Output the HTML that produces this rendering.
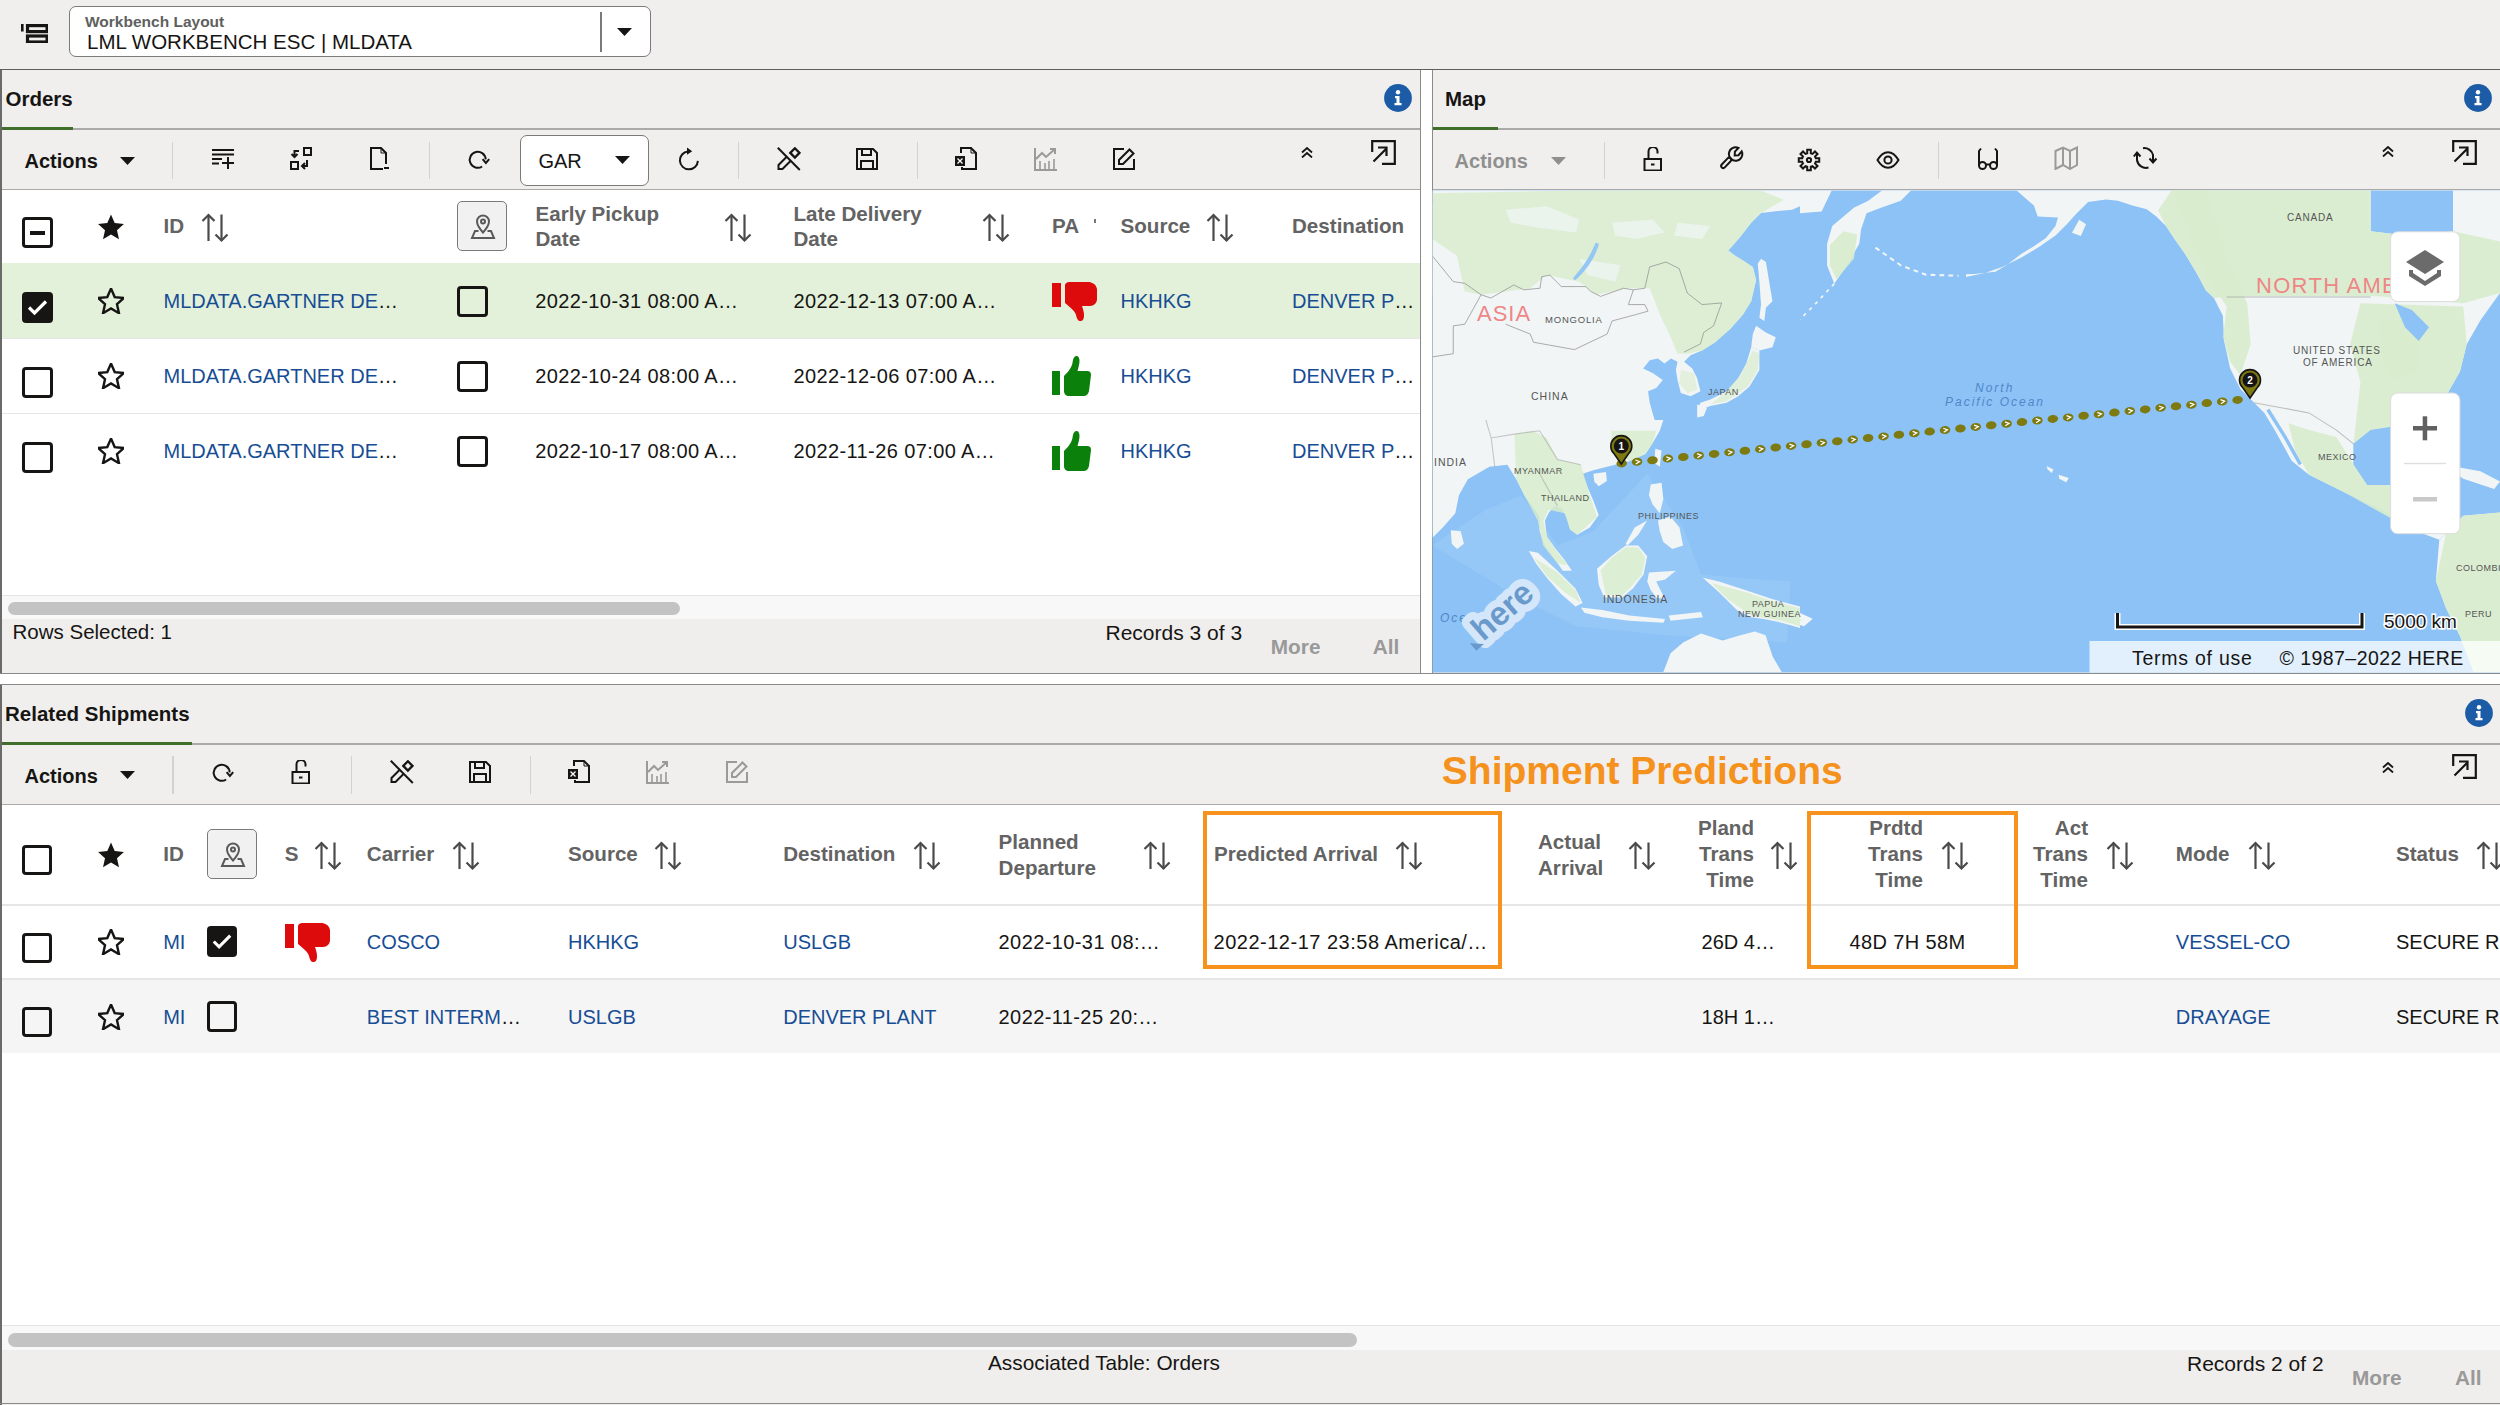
<!DOCTYPE html><html><head><meta charset="utf-8"><style>
html,body{margin:0;padding:0;}
body{width:2500px;height:1405px;overflow:hidden;position:relative;background:#f0efed;font-family:"Liberation Sans", sans-serif;}
.t{position:absolute;white-space:nowrap;font-family:"Liberation Sans", sans-serif;}
svg{display:block}
</style></head><body>
<svg style="position:absolute;left:21px;top:24px;" width="27" height="19" viewBox="0 0 27 19"><rect x="0" y="0" width="2.6" height="7.5" fill="#161513"/><rect x="6.5" y="1.6" width="19.6" height="6" fill="none" stroke="#161513" stroke-width="3.2"/><rect x="6.5" y="12" width="19.6" height="6" fill="none" stroke="#161513" stroke-width="3.2"/></svg>
<div style="position:absolute;left:68.5px;top:6px;width:580px;height:49px;border:1px solid #7b7b7b;border-radius:7px;background:#fff"></div>
<div style="position:absolute;left:600px;top:12px;width:1.5px;height:40px;background:#7a7a7a"></div>
<svg style="position:absolute;left:617px;top:28px;" width="15" height="8" viewBox="0 0 15 8"><polygon points="0,0 15,0 7.5,8" fill="#161513"/></svg>
<div class="t" style="left:85px;top:13.6px;font-size:15.5px;line-height:15.5px;font-weight:700;color:#5f5f5f;">Workbench Layout</div>
<div class="t" style="left:87px;top:31.6px;font-size:20.5px;line-height:20.5px;font-weight:400;color:#161513;">LML WORKBENCH ESC | MLDATA</div>
<div style="position:absolute;left:0px;top:68.5px;width:2500px;height:1.8px;background:#5e5e5e"></div>
<div style="position:absolute;left:0px;top:70px;width:1.6px;height:603px;background:#6a6a6a"></div>
<div style="position:absolute;left:1420px;top:70px;width:1.2px;height:603px;background:#8a8a8a"></div>
<div class="t" style="left:5.5px;top:88.6px;font-size:20.5px;line-height:20.5px;font-weight:700;color:#161513;">Orders</div>
<svg style="position:absolute;left:1383.7px;top:84.1px;" width="28" height="28" viewBox="0 0 28 28"><circle cx="14" cy="14" r="13.9" fill="#1c5ca6"/><circle cx="14" cy="8.2" r="2.2" fill="#fff"/><path d="M11 12H15.5V19H17.5V21.3H10.5V19H12.5V14.3H11Z" fill="#fff"/></svg>
<div style="position:absolute;left:1.6px;top:128.3px;width:1418.4px;height:1.4px;background:#aaa"></div>
<div style="position:absolute;left:1.6px;top:127.4px;width:71.4px;height:2.6px;background:#3f6f2a"></div>
<div class="t" style="left:24.5px;top:151.1px;font-size:20px;line-height:20px;font-weight:700;color:#161513;">Actions</div>
<svg style="position:absolute;left:120px;top:157px;" width="15" height="8" viewBox="0 0 15 8"><polygon points="0,0 15,0 7.5,8" fill="#161513"/></svg>
<div style="position:absolute;left:172px;top:141.5px;width:1.2px;height:37.5px;background:#d4d2cf"></div>
<svg style="position:absolute;left:210.5px;top:147.0px;" width="24" height="24" viewBox="0 0 24 24"><g fill="none" stroke="#161513" stroke-width="2" stroke-linecap="butt"><path d="M1 3H23M1 7.5H23M1 12H11M1 16.5H8M17 10V22M11 16H23"/></g></svg>
<svg style="position:absolute;left:288.5px;top:146.5px;" width="24" height="24" viewBox="0 0 24 24"><g fill="none" stroke="#161513" stroke-width="2" stroke-linecap="butt"><rect x="15" y="1" width="7" height="7"/><rect x="2" y="15" width="7" height="7"/><path d="M10 4H5.5V10M2.5 7L5.5 10L8.5 7"/><path d="M18 13V19H13M16 16L13 19L16 22"/></g></svg>
<svg style="position:absolute;left:368.0px;top:146.5px;" width="24" height="24" viewBox="0 0 24 24"><g fill="none" stroke="#161513" stroke-width="2" stroke-linecap="butt"><path d="M15 22H3V1H13L18 6V17"/><path d="M13 1V6H18" stroke-width="1"/><path d="M16 21H21"/></g></svg>
<div style="position:absolute;left:429px;top:141.5px;width:1.2px;height:37.5px;background:#d4d2cf"></div>
<svg style="position:absolute;left:467.0px;top:147.0px;" width="24" height="24" viewBox="0 0 24 24"><g fill="none" stroke="#161513" stroke-width="2" stroke-linecap="butt"><path d="M15.1 19.5A8 8 0 1 1 18.7 12.4"/><path d="M15.6 12.2L18.9 16L22.2 12.2"/></g></svg>
<div style="position:absolute;left:519.6px;top:135px;width:127px;height:49px;border:1px solid #7a7a7a;border-radius:7px;background:#fff"></div>
<div class="t" style="left:538.4px;top:150.5px;font-size:20px;line-height:20px;font-weight:400;color:#161513;">GAR</div>
<svg style="position:absolute;left:614.7px;top:156px;" width="15" height="8" viewBox="0 0 15 8"><polygon points="0,0 15,0 7.5,8" fill="#161513"/></svg>
<svg style="position:absolute;left:675.5px;top:146.5px;" width="24" height="24" viewBox="0 0 24 24"><g fill="none" stroke="#161513" stroke-width="2" stroke-linecap="butt"><path d="M21.9 13.9A9 9 0 1 1 12 4.4"/><polygon points="11,0.6 16.2,4.2 11,7.8" fill="#161513" stroke="none"/></g></svg>
<div style="position:absolute;left:738px;top:141.5px;width:1.2px;height:37.5px;background:#d4d2cf"></div>
<svg style="position:absolute;left:777.0px;top:147.0px;" width="24" height="24" viewBox="0 0 24 24"><g fill="none" stroke="#161513" stroke-width="2" stroke-linecap="butt"><path d="M0.8 0.8L22.8 23"/><path d="M13.3 5.9L17.9 1.3L22.5 5.9L17.9 10.5Z" stroke-width="2.3"/><path d="M9.5 10L1.5 18V22H5.5L13.5 14"/></g></svg>
<svg style="position:absolute;left:854.5px;top:147.0px;" width="24" height="24" viewBox="0 0 24 24"><g fill="none" stroke="#161513" stroke-width="2" stroke-linecap="butt"><path d="M2 2H18L22 6V22H2Z"/><path d="M7 2V8H16V2"/><path d="M6 22V14H18V22"/></g></svg>
<div style="position:absolute;left:917px;top:141.5px;width:1.2px;height:37.5px;background:#d4d2cf"></div>
<svg style="position:absolute;left:953.5px;top:146.5px;" width="24" height="24" viewBox="0 0 24 24"><g fill="none" stroke="#161513" stroke-width="2" stroke-linecap="butt"><path d="M7 6V1H17L22 6V22H8V20"/><path d="M17 1V6H22" stroke-width="1"/><rect x="1" y="9" width="10" height="10" fill="#161513" stroke="none"/><path d="M3.5 11.5L8.5 16.5M8.5 11.5L3.5 16.5" stroke="#fff" stroke-width="1.3"/></g></svg>
<svg style="position:absolute;left:1033.5px;top:146.5px;" width="24" height="24" viewBox="0 0 24 24"><g fill="none" stroke="#9a9a9a" stroke-width="2" stroke-linecap="butt"><path d="M1 1V23H23"/><path d="M2 12L8 6L12 10L21 2M16 2H21V7"/><path d="M6 14V22M11 16V22M15 14V22M20 12V22" stroke-width="1.6"/></g></svg>
<svg style="position:absolute;left:1111.5px;top:146.5px;" width="24" height="24" viewBox="0 0 24 24"><g fill="none" stroke="#161513" stroke-width="2" stroke-linecap="butt"><path d="M12 2H2V22H22V12"/><path d="M7 17V13L17.5 2.5L21.5 6.5L11 17Z"/></g></svg>
<svg style="position:absolute;left:1300.5px;top:146.5px;" width="12" height="11" viewBox="0 0 12 11"><g fill="none" stroke="#161513" stroke-width="1.8"><path d="M1 5.5L6 1L11 5.5"/><path d="M1 10.5L6 6L11 10.5"/></g></svg>
<svg style="position:absolute;left:1370.5px;top:139.5px;" width="25" height="25" viewBox="0 0 25 25"><g fill="none" stroke="#161513" stroke-width="2.2"><path d="M1.2 12V1.2H23.8V23.8H11"/><path d="M2.5 21.5L15 9M7 7.5H15.5V16"/></g></svg>
<div style="position:absolute;left:1.6px;top:189px;width:1418.4px;height:1.4px;background:#a9a9a9"></div>
<div style="position:absolute;left:1.6px;top:190.4px;width:1418.4px;height:405px;background:#fff"></div>
<div style="position:absolute;left:22px;top:217px;width:25px;height:25px;border:3px solid #161513;border-radius:4px;background:transparent"></div>
<div style="position:absolute;left:30px;top:230.5px;width:15px;height:4px;background:#161513"></div>
<svg style="position:absolute;left:98px;top:214px;" width="26" height="26" viewBox="0 0 26 26"><polygon points="13.00,0.60 16.70,9.10 25.93,10.00 18.99,16.15 20.99,25.20 13.00,20.50 5.01,25.20 7.01,16.15 0.07,10.00 9.30,9.10" fill="#161513"/></svg>
<div class="t" style="left:163.5px;top:216.0px;font-size:20.6px;line-height:20.6px;font-weight:700;color:#636363;">ID</div>
<svg style="position:absolute;left:201px;top:212.5px;" width="28" height="30" viewBox="0 0 28 30"><g fill="none" stroke="#4a4a4a" stroke-width="2.2"><path d="M7.5 2V28"/><path d="M1.5 8L7.5 2L13.5 8"/><path d="M20.5 1.5V27.5"/><path d="M14.5 21.5L20.5 27.5L26.5 21.5"/></g></svg>
<div style="position:absolute;left:457px;top:201px;width:48px;height:48px;border:1.5px solid #7a7a7a;border-radius:5px;background:#f1f1f1"></div>
<svg style="position:absolute;left:469.5px;top:213.5px;" width="26" height="26" viewBox="0 0 26 26"><g fill="none" stroke="#5a5a5a" stroke-width="2"><path d="M13 18.5C9 14 7 11 7 7.5A6 6 0 0 1 19 7.5C19 11 17 14 13 18.5Z"/><circle cx="13" cy="7.5" r="2"/><path d="M8.5 17H5L2 24H24L21 17H17.5"/></g></svg>
<div class="t" style="left:535.5px;top:203.8px;font-size:20.6px;line-height:20.6px;font-weight:700;color:#636363;">Early Pickup</div>
<div class="t" style="left:535.5px;top:229.4px;font-size:20.6px;line-height:20.6px;font-weight:700;color:#636363;">Date</div>
<svg style="position:absolute;left:723.5px;top:212.5px;" width="28" height="30" viewBox="0 0 28 30"><g fill="none" stroke="#4a4a4a" stroke-width="2.2"><path d="M7.5 2V28"/><path d="M1.5 8L7.5 2L13.5 8"/><path d="M20.5 1.5V27.5"/><path d="M14.5 21.5L20.5 27.5L26.5 21.5"/></g></svg>
<div class="t" style="left:793.4px;top:203.8px;font-size:20.6px;line-height:20.6px;font-weight:700;color:#636363;">Late Delivery</div>
<div class="t" style="left:793.4px;top:229.4px;font-size:20.6px;line-height:20.6px;font-weight:700;color:#636363;">Date</div>
<svg style="position:absolute;left:982px;top:212.5px;" width="28" height="30" viewBox="0 0 28 30"><g fill="none" stroke="#4a4a4a" stroke-width="2.2"><path d="M7.5 2V28"/><path d="M1.5 8L7.5 2L13.5 8"/><path d="M20.5 1.5V27.5"/><path d="M14.5 21.5L20.5 27.5L26.5 21.5"/></g></svg>
<div class="t" style="left:1052px;top:216.0px;font-size:20.6px;line-height:20.6px;font-weight:700;color:#636363;">PA</div>
<div style="position:absolute;left:1094px;top:219px;width:2px;height:4px;background:#777"></div>
<div class="t" style="left:1120.5px;top:216.0px;font-size:20.6px;line-height:20.6px;font-weight:700;color:#636363;">Source</div>
<svg style="position:absolute;left:1206px;top:212.5px;" width="28" height="30" viewBox="0 0 28 30"><g fill="none" stroke="#4a4a4a" stroke-width="2.2"><path d="M7.5 2V28"/><path d="M1.5 8L7.5 2L13.5 8"/><path d="M20.5 1.5V27.5"/><path d="M14.5 21.5L20.5 27.5L26.5 21.5"/></g></svg>
<div class="t" style="left:1292px;top:216.0px;font-size:20.6px;line-height:20.6px;font-weight:700;color:#636363;">Destination</div>
<div style="position:absolute;left:1.6px;top:263px;width:1418.4px;height:75px;background:#e3f1da"></div>
<div style="position:absolute;left:1.6px;top:337.5px;width:1418.4px;height:1.2px;background:#e6e6e6"></div>
<div style="position:absolute;left:22px;top:292px;width:31px;height:31px;background:#161513;border-radius:4px"></div>
<svg style="position:absolute;left:22px;top:292px;" width="31" height="31" viewBox="0 0 31 31"><path d="M7 15.5L12.5 21L24 9.5" fill="none" stroke="#fff" stroke-width="3.2"/></svg>
<svg style="position:absolute;left:98px;top:288px;" width="26" height="26" viewBox="0 0 26 26"><polygon points="13.00,0.60 16.70,9.10 25.93,10.00 18.99,16.15 20.99,25.20 13.00,20.50 5.01,25.20 7.01,16.15 0.07,10.00 9.30,9.10" fill="none" stroke="#161513" stroke-width="2.4" stroke-linejoin="miter"/></svg>
<div class="t" style="left:163.5px;top:291.3px;font-size:20px;line-height:20px;font-weight:400;color:#174d94;">MLDATA.GARTNER DE<span style="color:#161513">…</span></div>
<div style="position:absolute;left:457px;top:286px;width:25px;height:25px;border:3px solid #161513;border-radius:4px;background:transparent"></div>
<div class="t" style="left:535.2px;top:291.3px;font-size:20px;line-height:20px;font-weight:400;color:#161513;letter-spacing:0.4px">2022-10-31 08:00 A…</div>
<div class="t" style="left:793.4px;top:291.3px;font-size:20px;line-height:20px;font-weight:400;color:#161513;letter-spacing:0.4px">2022-12-13 07:00 A…</div>
<svg style="position:absolute;left:1052px;top:281px;" width="46" height="42" viewBox="0 0 46 42"><g fill="#dd0b0b"><rect x="0" y="2" width="9" height="24"/><path d="M13 5C13 2 15 1 18 1H36C40 1 44 3 45 8L45 18C45 22 42 25 38 25H30C31 28 32 31 32 34C32 38 31 40 28 40C26 40 25 38 24 34C23 30 19 27 13 22Z"/></g></svg>
<div class="t" style="left:1120.5px;top:291.3px;font-size:20px;line-height:20px;font-weight:400;color:#174d94;">HKHKG</div>
<div class="t" style="left:1292px;top:291.3px;font-size:20px;line-height:20px;font-weight:400;color:#174d94;">DENVER P<span style="color:#161513">…</span></div>
<div style="position:absolute;left:1.6px;top:412.5px;width:1418.4px;height:1.2px;background:#e6e6e6"></div>
<div style="position:absolute;left:22px;top:367px;width:25px;height:25px;border:3px solid #161513;border-radius:4px;background:transparent"></div>
<svg style="position:absolute;left:98px;top:363px;" width="26" height="26" viewBox="0 0 26 26"><polygon points="13.00,0.60 16.70,9.10 25.93,10.00 18.99,16.15 20.99,25.20 13.00,20.50 5.01,25.20 7.01,16.15 0.07,10.00 9.30,9.10" fill="none" stroke="#161513" stroke-width="2.4" stroke-linejoin="miter"/></svg>
<div class="t" style="left:163.5px;top:365.9px;font-size:20px;line-height:20px;font-weight:400;color:#174d94;">MLDATA.GARTNER DE<span style="color:#161513">…</span></div>
<div style="position:absolute;left:457px;top:361px;width:25px;height:25px;border:3px solid #161513;border-radius:4px;background:transparent"></div>
<div class="t" style="left:535.2px;top:365.9px;font-size:20px;line-height:20px;font-weight:400;color:#161513;letter-spacing:0.4px">2022-10-24 08:00 A…</div>
<div class="t" style="left:793.4px;top:365.9px;font-size:20px;line-height:20px;font-weight:400;color:#161513;letter-spacing:0.4px">2022-12-06 07:00 A…</div>
<svg style="position:absolute;left:1051px;top:355px;" width="42" height="42" viewBox="0 0 42 42"><g fill="#0b800b"><rect x="1" y="16" width="8" height="24"/><path d="M13 21C16 18 20 14 21.5 8C22 4 23 1 25.5 1C27.5 1 28.5 3 28.5 6C28.5 9 27.5 12 26.5 16H36C39 16 40 17.5 40 20L38 36C37 40 35 41 32 41H18C15 41 13 39 13 36Z"/></g></svg>
<div class="t" style="left:1120.5px;top:365.9px;font-size:20px;line-height:20px;font-weight:400;color:#174d94;">HKHKG</div>
<div class="t" style="left:1292px;top:365.9px;font-size:20px;line-height:20px;font-weight:400;color:#174d94;">DENVER P<span style="color:#161513">…</span></div>
<div style="position:absolute;left:22px;top:442px;width:25px;height:25px;border:3px solid #161513;border-radius:4px;background:transparent"></div>
<svg style="position:absolute;left:98px;top:438px;" width="26" height="26" viewBox="0 0 26 26"><polygon points="13.00,0.60 16.70,9.10 25.93,10.00 18.99,16.15 20.99,25.20 13.00,20.50 5.01,25.20 7.01,16.15 0.07,10.00 9.30,9.10" fill="none" stroke="#161513" stroke-width="2.4" stroke-linejoin="miter"/></svg>
<div class="t" style="left:163.5px;top:440.5px;font-size:20px;line-height:20px;font-weight:400;color:#174d94;">MLDATA.GARTNER DE<span style="color:#161513">…</span></div>
<div style="position:absolute;left:457px;top:436px;width:25px;height:25px;border:3px solid #161513;border-radius:4px;background:transparent"></div>
<div class="t" style="left:535.2px;top:440.5px;font-size:20px;line-height:20px;font-weight:400;color:#161513;letter-spacing:0.4px">2022-10-17 08:00 A…</div>
<div class="t" style="left:793.4px;top:440.5px;font-size:20px;line-height:20px;font-weight:400;color:#161513;letter-spacing:0.4px">2022-11-26 07:00 A…</div>
<svg style="position:absolute;left:1051px;top:430px;" width="42" height="42" viewBox="0 0 42 42"><g fill="#0b800b"><rect x="1" y="16" width="8" height="24"/><path d="M13 21C16 18 20 14 21.5 8C22 4 23 1 25.5 1C27.5 1 28.5 3 28.5 6C28.5 9 27.5 12 26.5 16H36C39 16 40 17.5 40 20L38 36C37 40 35 41 32 41H18C15 41 13 39 13 36Z"/></g></svg>
<div class="t" style="left:1120.5px;top:440.5px;font-size:20px;line-height:20px;font-weight:400;color:#174d94;">HKHKG</div>
<div class="t" style="left:1292px;top:440.5px;font-size:20px;line-height:20px;font-weight:400;color:#174d94;">DENVER P<span style="color:#161513">…</span></div>
<div style="position:absolute;left:1.6px;top:595px;width:1418.4px;height:1px;background:#e4e4e4"></div>
<div style="position:absolute;left:1.6px;top:596px;width:1418.4px;height:23px;background:#f8f8f8"></div>
<div style="position:absolute;left:8px;top:601.5px;width:672px;height:13.5px;background:#c3c3c3;border-radius:7px"></div>
<div style="position:absolute;left:1.6px;top:619px;width:1418.4px;height:54px;background:#efeeec"></div>
<div class="t" style="left:12.5px;top:622.1px;font-size:20.5px;line-height:20.5px;font-weight:400;color:#161513;">Rows Selected: 1</div>
<div class="t" style="left:1105.5px;top:621.6px;font-size:21px;line-height:21px;font-weight:400;color:#161513;">Records 3 of 3</div>
<div class="t" style="left:1270.8px;top:637.1px;font-size:20.8px;line-height:20.8px;font-weight:700;color:#999;">More</div>
<div class="t" style="left:1372.7px;top:637.1px;font-size:20.8px;line-height:20.8px;font-weight:700;color:#999;">All</div>
<div style="position:absolute;left:0px;top:672.5px;width:1432px;height:1.5px;background:#8a8a8a"></div>
<div style="position:absolute;left:1421px;top:70px;width:10.5px;height:603px;background:#fff"></div>
<div style="position:absolute;left:0px;top:674px;width:2500px;height:10.5px;background:#fff"></div>
<div style="position:absolute;left:1431.5px;top:70px;width:1.3px;height:603px;background:#8a8a8a"></div>
<div class="t" style="left:1445px;top:89.2px;font-size:20.5px;line-height:20.5px;font-weight:700;color:#161513;">Map</div>
<svg style="position:absolute;left:2464px;top:84px;" width="28" height="28" viewBox="0 0 28 28"><circle cx="14" cy="14" r="13.9" fill="#1c5ca6"/><circle cx="14" cy="8.2" r="2.2" fill="#fff"/><path d="M11 12H15.5V19H17.5V21.3H10.5V19H12.5V14.3H11Z" fill="#fff"/></svg>
<div style="position:absolute;left:1432.8px;top:128.3px;width:1067.2px;height:1.4px;background:#aaa"></div>
<div style="position:absolute;left:1432.8px;top:127.4px;width:65px;height:2.6px;background:#3f6f2a"></div>
<div class="t" style="left:1454.6px;top:151.1px;font-size:20px;line-height:20px;font-weight:700;color:#8f8f8f;">Actions</div>
<svg style="position:absolute;left:1550.5px;top:157px;" width="15" height="8" viewBox="0 0 15 8"><polygon points="0,0 15,0 7.5,8" fill="#8f8f8f"/></svg>
<div style="position:absolute;left:1603.5px;top:141.5px;width:1.2px;height:37.5px;background:#d4d2cf"></div>
<svg style="position:absolute;left:1641.0px;top:146.5px;" width="24" height="24" viewBox="0 0 24 24"><g fill="none" stroke="#161513" stroke-width="2" stroke-linecap="butt"><rect x="3.5" y="12" width="16.5" height="11.5"/><path d="M7.5 12V4.5A4.5 4.5 0 0 1 16.5 4.5V6.5"/><path d="M10 17.5H13.5"/></g></svg>
<svg style="position:absolute;left:1719.5px;top:146.0px;" width="24" height="24" viewBox="0 0 24 24"><g fill="none" stroke="#161513" stroke-width="2" stroke-linecap="butt"><path d="M21.7 5.3A6.7 6.7 0 1 1 18.4 2.0L14.9 5.6L14.7 9.4L18.5 9.2Z"/><rect x="-6.3" y="-2.1" width="12.6" height="4.2" rx="2.1" transform="translate(6.2 16.9) rotate(133.7)"/></g></svg>
<svg style="position:absolute;left:1797.4px;top:147.5px;" width="24" height="24" viewBox="0 0 24 24"><g fill="none" stroke="#161513" stroke-width="2" stroke-linecap="butt"><circle cx="12" cy="12" r="2.1"/><path d="M10.20 5.24 L10.20 1.76 L13.80 1.76 L13.80 5.24 L15.51 5.94 L17.97 3.48 L20.52 6.03 L18.06 8.49 L18.76 10.20 L22.24 10.20 L22.24 13.80 L18.76 13.80 L18.06 15.51 L20.52 17.97 L17.97 20.52 L15.51 18.06 L13.80 18.76 L13.80 22.24 L10.20 22.24 L10.20 18.76 L8.49 18.06 L6.03 20.52 L3.48 17.97 L5.94 15.51 L5.24 13.80 L1.76 13.80 L1.76 10.20 L5.24 10.20 L5.94 8.49 L3.48 6.03 L6.03 3.48 L8.49 5.94Z" stroke-linejoin="miter"/></g></svg>
<svg style="position:absolute;left:1875.5px;top:147.6px;" width="24" height="24" viewBox="0 0 24 24"><g fill="none" stroke="#161513" stroke-width="2" stroke-linecap="butt"><path d="M1.5 12C4.5 7 8 4.2 12 4.2S19.5 7 22.5 12C19.5 17 16 19.8 12 19.8S4.5 17 1.5 12Z"/><circle cx="12" cy="12" r="3.6"/></g></svg>
<div style="position:absolute;left:1938px;top:141.5px;width:1.2px;height:37.5px;background:#d4d2cf"></div>
<svg style="position:absolute;left:1976.0px;top:147.4px;" width="24" height="24" viewBox="0 0 24 24"><g fill="none" stroke="#161513" stroke-width="2" stroke-linecap="butt"><path d="M5 1.5L3 4V18.5"/><path d="M19 1.5L21 4V18.5"/><circle cx="6.5" cy="18.5" r="3.5"/><circle cx="17.5" cy="18.5" r="3.5"/><path d="M10 17.5H14"/></g></svg>
<svg style="position:absolute;left:2054.3px;top:146.0px;" width="24" height="24" viewBox="0 0 24 24"><g fill="none" stroke="#9a9a9a" stroke-width="2" stroke-linecap="butt"><path d="M1.5 5L9 1.5L16 5L23 1.5V19L16 23L9 19L1.5 23Z"/><path d="M9 1.5V19M16 5V23"/></g></svg>
<svg style="position:absolute;left:2132.5px;top:146.0px;" width="24" height="24" viewBox="0 0 24 24"><g fill="none" stroke="#161513" stroke-width="2" stroke-linecap="butt"><path d="M10 2.2A9 9 0 0 1 20 9V16"/><path d="M16.5 12.5L20 16.5L23.5 12.5"/><path d="M15.5 21.5A9 9 0 0 1 4 14V6.5"/><path d="M0.8 10.5L4 6.5L7.5 10.5"/></g></svg>
<svg style="position:absolute;left:2382px;top:146px;" width="12" height="11" viewBox="0 0 12 11"><g fill="none" stroke="#161513" stroke-width="1.8"><path d="M1 5.5L6 1L11 5.5"/><path d="M1 10.5L6 6L11 10.5"/></g></svg>
<svg style="position:absolute;left:2452px;top:139.5px;" width="25" height="25" viewBox="0 0 25 25"><g fill="none" stroke="#161513" stroke-width="2.2"><path d="M1.2 12V1.2H23.8V23.8H11"/><path d="M2.5 21.5L15 9M7 7.5H15.5V16"/></g></svg>
<svg style="position:absolute;left:1432px;top:190px" width="1068" height="483" viewBox="1432 190 1068 483">
<defs><clipPath id="mc"><rect x="1432.8" y="190.4" width="1067.2" height="482.1"/></clipPath></defs>
<g clip-path="url(#mc)">
<rect x="1432" y="190" width="1068" height="483" fill="#8cc2f6"/>
<g transform="translate(1432,190) scale(0.34297)">
<path d="M1000,0 L1557,0 L1557,120 L1400,150 L1250,250 L1100,330 L1000,420 L960,600 L850,700 L760,800 L760,1100 L850,1110 L1120,1230 L1150,1300 L1050,1405 L600,1405 L300,1280 L250,1100 L300,900 L550,850 L700,700 L700,600 L850,400 L900,200 Z" fill="#9dccf8" opacity="0"/>
<path d="M0,0 L1010,0 L960,70 L905,125 L880,180 L930,195 L950,240 L955,300 L930,350 L880,390 L830,430 L790,455 L760,480 L740,500 L750,560 L770,590 L735,605 L720,560 L705,510 L680,500 L650,505 L620,515 L660,540 L640,570 L650,630 L670,660 L650,700 L620,740 L590,770 L550,800 L510,810 L480,830 L470,870 L455,940 L440,990 L410,1000 L400,960 L395,920 L380,880 L350,870 L330,890 L330,950 L355,1020 L380,1080 L400,1100 L360,1100 L330,1040 L300,960 L280,900 L260,850 L200,830 L130,850 L80,900 L60,960 L40,1010 L0,1000 Z" fill="#f1f5f6"/>
<path d="M62,995 L82,990 L92,1030 L72,1045 L58,1020 Z" fill="#f1f5f6"/>
<path d="M478,835 L510,832 L505,862 L480,860 Z" fill="#f1f5f6"/>
<path d="M660,715 L682,720 L676,790 L655,770 Z" fill="#f1f5f6"/>
<path d="M640,860 L675,862 L690,930 L720,960 L740,1040 L705,1045 L690,990 L660,950 L645,910 Z" fill="#f1f5f6"/>
<path d="M480,1100 L560,1055 L625,1080 L632,1150 L600,1200 L520,1212 L488,1160 Z" fill="#f1f5f6"/>
<path d="M280,1048 L322,1060 L400,1148 L452,1208 L422,1228 L340,1152 Z" fill="#f1f5f6"/>
<path d="M430,1215 L560,1225 L650,1250 L640,1268 L520,1252 L440,1238 Z" fill="#f1f5f6"/>
<path d="M620,1110 L705,1098 L685,1140 L722,1170 L662,1182 L642,1230 L630,1160 Z" fill="#f1f5f6"/>
<path d="M800,1140 L900,1158 L1000,1200 L1110,1250 L1085,1272 L980,1242 L880,1262 L838,1222 L790,1172 Z" fill="#f1f5f6"/>
<path d="M670,1405 L700,1330 L760,1300 L830,1322 L900,1290 L962,1290 L1002,1332 L1022,1405 Z" fill="#f1f5f6"/>
<path d="M945,392 L1000,420 L1010,455 L960,470 L940,520 L930,580 L900,600 L860,630 L800,660 L780,640 L800,620 L850,600 L890,560 L915,500 L930,450 Z" fill="#f1f5f6"/>
<path d="M955,195 L977,200 L992,300 L977,382 L960,372 L960,280 Z" fill="#f1f5f6"/>
<path d="M1152,157 L1167,105 L1230,52 L1272,31 L1314,0 L1398,0 L1367,31 L1309,52 L1267,68 L1251,115 L1246,157 L1209,220 L1173,273 L1152,220 Z" fill="#f1f5f6"/>
<path d="M1000,0 L1166,0 L1136,63 L1073,68 L1010,60 Z" fill="#f1f5f6"/>
<path d="M1293,168 L1367,220 L1440,247 L1535,250" fill="none" stroke="#f1f5f6" stroke-width="6" stroke-dasharray="14 12"/><path d="M1173,273 L1120,330 L1070,380 L1010,430" fill="none" stroke="#f1f5f6" stroke-width="5" stroke-dasharray="10 14"/>
<path d="M0,40 L250,20 L600,0 L1000,0 L960,70 L905,125 L880,180 L930,195 L950,240 L955,300 L900,380 L800,450 L760,480 L700,500 L640,430 L650,300 L560,280 L460,300 L300,280 L200,250 L120,270 L80,200 L0,200 Z" fill="#d8eccd" opacity="0.9"/>
<path d="M230,700 L330,690 L420,760 L500,800 L480,830 L455,940 L440,990 L410,1000 L395,920 L360,880 L280,880 L250,800 Z" fill="#d8eccd" opacity="0.9"/>
<path d="M488,1130 L560,1060 L620,1085 L630,1150 L570,1180 L500,1170 Z" fill="#d8eccd" opacity="0.9"/>
<path d="M820,1150 L1000,1200 L1080,1255 L980,1240 L880,1258 L840,1220 Z" fill="#d8eccd" opacity="0.9"/>
<path d="M1160,160 L1200,120 L1240,130 L1230,200 L1180,260 L1160,220 Z" fill="#d8eccd" opacity="0.9"/>
<path d="M0,190 L60,250 L150,280 L250,300 L320,245 L420,290 L560,280 L650,260 L700,280 L720,300" fill="none" stroke="#9a9a9a" stroke-width="3" opacity="0.6"/>
<path d="M260,375 L420,460 L560,430 L640,380 L620,330 L660,300" fill="none" stroke="#9a9a9a" stroke-width="3" opacity="0.6"/>
<path d="M640,215 L700,210 L760,250 L800,320 L850,340 L800,420 L760,470" fill="none" stroke="#9a9a9a" stroke-width="3" opacity="0.6"/>
</g>
<g transform="translate(1432,190) scale(0.16369)">
<rect x="0" y="0" width="2248" height="1405" fill="#8cc2f6"/>
<path d="M1900,600 L2248,500 L2248,1405 L1500,1405 L1500,1100 L1700,950 Z" fill="#9dccf8" opacity="0.0"/>
<path d="M2248,100 L2200,120 L2100,130 L2010,140 L1950,200 L1880,290 L1810,370 L1850,400 L1900,430 L1960,470 L1980,550 L1950,680 L1900,760 L1820,850 L1730,930 L1650,980 L1580,1010 L1540,1050 L1590,1090 L1620,1150 L1640,1230 L1580,1260 L1520,1240 L1500,1160 L1490,1100 L1500,1050 L1460,1030 L1420,1060 L1380,1030 L1330,1040 L1290,1090 L1350,1120 L1410,1160 L1370,1210 L1320,1230 L1330,1300 L1360,1405 L0,1405 L0,0 L2248,0 Z" fill="#f1f5f6"/>
<path d="M2010,420 L2040,440 L2060,560 L2080,680 L2040,720 L2030,800 L2000,780 L2010,700 L2000,560 L1990,450 Z" fill="#f1f5f6"/>
<path d="M1980,830 L2040,870 L2100,900 L2080,960 L2000,980 L1950,960 L1960,880 Z" fill="#f1f5f6"/>
<path d="M1950,960 L2000,980 L2000,1100 L1940,1200 L1870,1260 L1800,1300 L1700,1320 L1620,1350 L1640,1300 L1700,1280 L1800,1230 L1870,1150 L1920,1060 Z" fill="#f1f5f6"/>
<path d="M1620,1310 L1680,1330 L1660,1380 L1620,1390 Z" fill="#f1f5f6"/>
<path d="M0,20 L1000,0 L2000,0 L2150,60 L2010,140 L1950,200 L1880,290 L1810,370 L1850,400 L1900,430 L1960,470 L1980,550 L1950,680 L1900,760 L1820,850 L1730,930 L1650,980 L1560,1000 L1500,1000 L1450,880 L1400,780 L1330,600 L1200,600 L1000,640 L900,560 L700,520 L600,600 L450,620 L300,640 L200,620 L150,400 L0,300 Z" fill="#d8eccd" opacity="0.8"/>
<path d="M1960,980 L2000,1000 L1990,1100 L1930,1200 L1800,1290 L1700,1310 L1800,1230 L1880,1140 Z" fill="#d8eccd" opacity="0.7"/>
<path d="M1520,1100 L1600,1120 L1620,1220 L1560,1240 L1510,1180 Z" fill="#d8eccd" opacity="0.6"/>
<path d="M450,120 L700,100 L900,180 L880,260 L650,230 L480,200 Z" fill="#f1f5f6" opacity="0.7"/>
<path d="M1100,200 L1350,180 L1420,260 L1250,300 L1120,280 Z" fill="#f1f5f6" opacity="0.7"/>
<path d="M1500,200 L1700,220 L1650,300 L1480,280 Z" fill="#f1f5f6" opacity="0.7"/>
<path d="M0,300 L150,400 L200,620 L0,640 Z" fill="#f1f5f6" opacity="0.7"/>
<path d="M900,420 L1150,460 L1120,560 L950,520 Z" fill="#f1f5f6" opacity="0.7"/>
<path d="M860,540 C920,470 960,420 1000,320 L1020,330 C990,430 940,490 875,552 Z" fill="#8cc2f6" opacity="0.9"/>
<path d="M450,820 L600,880 L620,930 L870,975 L1070,880 L1100,800 L1250,760 L1320,740 L1300,700 L1200,700 L1230,610 L1170,600 L1030,650 L970,620 L940,590 L790,590 L720,520 L670,530 L660,600 L560,610 L500,580 L360,660 L300,640 L200,820 L130,830 L130,1000 L0,1020" fill="none" stroke="#8f8f8f" stroke-width="6" opacity="0.75"/>
<path d="M1330,470 L1430,440 L1510,480 L1560,630 L1650,700 L1770,690 L1720,830 L1660,870 L1640,940 L1540,990 M1330,470 L1300,600 L1230,610 M0,400 L130,560 L200,570 L300,640" fill="none" stroke="#8f8f8f" stroke-width="6" opacity="0.75"/>
</g>
<g transform="translate(1432,420) scale(0.17934)">
<rect x="0" y="0" width="2052" height="1405" fill="#8cc2f6"/>
<path d="M0,700 L300,500 L500,420 L700,700 L900,620 L1200,300 L1400,600 L1500,860 L1700,880 L2000,900 L1980,1240 L1300,1200 L1100,1180 L800,1150 L500,1000 Z" fill="#9dccf8" opacity="0.6"/>
<path d="M0,0 L1290,0 L1270,60 L1230,130 L1190,190 L1100,230 L1060,240 L960,265 L900,280 L840,300 L870,380 L900,450 L930,530 L880,600 L810,640 L770,610 L750,540 L720,490 L680,480 L650,520 L630,560 L640,650 L690,720 L740,780 L780,840 L730,840 L680,770 L630,700 L600,620 L600,540 L560,480 L520,430 L470,330 L420,250 L320,260 L200,330 L150,420 L130,520 L60,600 L0,660 Z" fill="#f1f5f6"/>
<path d="M105,615 L160,620 L178,690 L140,720 L110,690 Z" fill="#f1f5f6"/>
<path d="M900,300 L970,290 L975,340 L930,370 L905,345 Z" fill="#f1f5f6"/>
<path d="M1245,160 L1280,170 L1270,260 L1240,240 Z" fill="#f1f5f6"/>
<path d="M1220,360 L1280,350 L1290,440 L1270,520 L1230,470 L1210,420 Z" fill="#f1f5f6"/>
<path d="M1260,560 L1330,540 L1380,600 L1400,700 L1340,720 L1290,680 L1270,620 Z" fill="#f1f5f6"/>
<path d="M1130,600 L1200,560 L1150,640 L1090,700 L1080,690 Z" fill="#f1f5f6"/>
<path d="M540,730 L590,740 L700,840 L800,940 L840,1020 L800,1040 L720,970 L640,880 L580,800 Z" fill="#f1f5f6"/>
<path d="M920,830 L1000,760 L1080,700 L1150,700 L1200,760 L1180,860 L1120,940 L1060,990 L960,990 L930,920 Z" fill="#f1f5f6"/>
<path d="M1210,850 L1360,840 L1300,890 L1250,900 L1280,960 L1300,1000 L1250,990 L1220,950 L1200,900 Z" fill="#f1f5f6"/>
<path d="M830,1045 L950,1060 L1100,1090 L1300,1110 L1290,1130 L1100,1120 L950,1100 L850,1075 Z" fill="#f1f5f6"/>
<path d="M1320,1090 L1500,1070 L1510,1100 L1330,1120 Z" fill="#f1f5f6"/>
<path d="M1510,880 L1600,900 L1750,950 L1900,1000 L2052,1040 L2052,1160 L1950,1130 L1850,1110 L1780,1100 L1700,1060 L1600,960 Z" fill="#f1f5f6"/>
<path d="M1290,1405 L1330,1300 L1400,1240 L1500,1190 L1620,1230 L1720,1200 L1800,1180 L1860,1200 L1900,1320 L1950,1405 Z" fill="#f1f5f6"/>
<path d="M460,80 L560,60 L640,100 L700,220 L830,250 L880,420 L920,540 L810,640 L770,610 L740,520 L650,500 L620,560 L640,650 L700,740 L760,810 L700,800 L620,700 L590,560 L520,430 L470,330 Z" fill="#d8eccd" opacity="0.85"/>
<path d="M940,840 L1000,770 L1080,710 L1150,710 L1190,770 L1170,860 L1110,930 L1060,980 L970,975 Z" fill="#d8eccd" opacity="0.85"/>
<path d="M570,770 L700,850 L800,950 L830,1020 L740,960 L640,870 Z" fill="#d8eccd" opacity="0.85"/>
<path d="M1560,910 L1750,960 L1900,1010 L2052,1050 L2052,1150 L1950,1120 L1780,1090 L1650,1000 Z" fill="#d8eccd" opacity="0.85"/>
<path d="M1000,60 L1250,60 L1230,130 L1190,190 L1100,230 L1000,150 Z" fill="#d8eccd" opacity="0.85"/>
<path d="M300,0 L330,100 L450,80 L600,60 L700,220 L830,250 M600,300 L700,480 M330,100 L350,260" fill="none" stroke="#9a9a9a" stroke-width="6" opacity="0.5"/>
</g>
<g transform="translate(1966,190) scale(0.34297)">
<path d="M0,120 L130,40 L450,60 L620,120 L700,280 L730,400 L760,560 L880,700 L1000,900 L1250,980 L1350,1100 L1400,1405 L1557,1405 L1557,0 L0,0 Z" fill="#9dccf8" opacity="0.0"/>
<path d="M146,0 L1180,0 L1180,120 L1300,135 L1420,120 L1420,0 L1557,0 L1557,300 L1500,380 L1460,450 L1440,530 L1400,600 L1340,680 L1250,690 L1180,700 L1130,740 L1130,800 L1170,860 L1240,860 L1260,900 L1330,960 L1400,1000 L1380,1020 L1300,990 L1210,930 L1100,880 L1000,830 L950,790 L900,700 L870,650 L830,610 L800,580 L770,520 L752,437 L749,367 L723,315 L699,292 L674,245 L653,210 L636,182 L611,147 L583,105 L555,77 L527,56 L485,45 L443,31 L408,28 L356,35 L321,70 L296,98 L261,133 L216,164 L163,196 L107,224 L58,241 L0,254 L0,246 L23,245 L86,238 L121,217 L163,185 L198,164 L233,140 L261,105 L268,80 L209,77 L198,45 L170,21 Z" fill="#f1f5f6"/>
<path d="M330,87 L350,100 L335,134 L309,125 Z" fill="#f1f5f6"/>
<path d="M1340,680 L1382,762 L1362,782 L1322,702 Z" fill="#f1f5f6"/>
<path d="M1390,800 L1500,820 L1557,850 L1540,872 L1450,842 Z" fill="#f1f5f6"/>
<path d="M1380,1020 L1450,950 L1557,940 L1557,1405 L1480,1405 L1440,1300 L1400,1220 L1370,1140 Z" fill="#f1f5f6"/>
<path d="M235,805 L255,815 L250,825 L238,815 Z" fill="#f1f5f6"/>
<path d="M270,830 L300,840 L292,852 L272,842 Z" fill="#f1f5f6"/>

<path d="M600,0 L1180,0 L1180,120 L1300,135 L1420,120 L1557,150 L1557,300 L1450,330 L1200,310 L780,310 L723,315 L699,292 L674,245 L653,210 L636,182 L611,147 L583,105 L560,60 Z" fill="#d8eccd" opacity="0.9"/>
<path d="M1150,330 L1450,340 L1460,450 L1440,530 L1400,600 L1340,680 L1250,690 L1180,700 L1130,740 L1150,560 L1120,450 Z" fill="#d8eccd" opacity="0.9"/>
<path d="M600,0 L700,0 L760,200 L820,330 L830,450 L800,540 L770,500 L750,430 L760,340 L700,250 Z" fill="#d8eccd" opacity="0.9"/>
<path d="M1200,380 L1300,380 L1330,520 L1250,560 L1210,480 Z" fill="#d8eccd" opacity="0.9"/>
<path d="M940,680 L1000,700 L1080,720 L1130,800 L1170,860 L1240,860 L1260,900 L1330,960 L1280,980 L1100,880 L1000,830 L960,760 Z" fill="#d8eccd" opacity="0.9"/>
<path d="M1400,1000 L1450,950 L1557,940 L1557,1405 L1480,1405 L1440,1300 L1400,1220 L1370,1140 Z" fill="#d8eccd" opacity="0.9"/>
<path d="M1130,740 L1180,700 L1240,690 L1240,860 L1170,860 L1130,800 Z" fill="#8cc2f6"/>
<path d="M1250,330 L1300,350 L1350,400 L1320,440 L1280,400 Z" fill="#8cc2f6"/>
<path d="M880,640 L930,720 L975,800" fill="none" stroke="#8cc2f6" stroke-width="10"/>
<path d="M760,312 L1180,312" stroke="#9a9a9a" stroke-width="3" opacity="0.6"/><path d="M840,620 L1000,650 L1080,700 L1130,740" stroke="#9a9a9a" stroke-width="3" fill="none" opacity="0.6"/>
</g>
<text x="1477" y="321" font-family="Liberation Sans" font-size="22" fill="#ee8686" letter-spacing="1">ASIA</text>
<text x="2256" y="293" font-family="Liberation Sans" font-size="22" fill="#ee8686" letter-spacing="1.3">NORTH AMERICA</text>
<text x="1545" y="323" font-family="Liberation Sans" font-size="9.5" fill="#555" letter-spacing="0.8">MONGOLIA</text>
<text x="1531" y="400" font-family="Liberation Sans" font-size="10.5" fill="#555" letter-spacing="1">CHINA</text>
<text x="1434" y="466" font-family="Liberation Sans" font-size="10.5" fill="#555" letter-spacing="1">INDIA</text>
<text x="1514" y="474" font-family="Liberation Sans" font-size="9" fill="#555" letter-spacing="0.5">MYANMAR</text>
<text x="1541" y="501" font-family="Liberation Sans" font-size="9" fill="#555" letter-spacing="0.5">THAILAND</text>
<text x="1638" y="519" font-family="Liberation Sans" font-size="9" fill="#555" letter-spacing="0.5">PHILIPPINES</text>
<text x="1708" y="395" font-family="Liberation Sans" font-size="9" fill="#555" letter-spacing="0.5">JAPAN</text>
<text x="1603" y="603" font-family="Liberation Sans" font-size="10.5" fill="#555" letter-spacing="0.8">INDONESIA</text>
<text x="1752" y="607" font-family="Liberation Sans" font-size="9" fill="#555" letter-spacing="0.5">PAPUA</text>
<text x="1738" y="617" font-family="Liberation Sans" font-size="9" fill="#555" letter-spacing="0.5">NEW GUINEA</text>
<text x="2287" y="221" font-family="Liberation Sans" font-size="10" fill="#555" letter-spacing="0.8">CANADA</text>
<text x="2293" y="354" font-family="Liberation Sans" font-size="10" fill="#555" letter-spacing="0.8">UNITED STATES</text>
<text x="2303" y="366" font-family="Liberation Sans" font-size="10" fill="#555" letter-spacing="0.8">OF AMERICA</text>
<text x="2318" y="460" font-family="Liberation Sans" font-size="9" fill="#555" letter-spacing="0.5">MEXICO</text>
<text x="2456" y="571" font-family="Liberation Sans" font-size="9" fill="#555" letter-spacing="0.5">COLOMBIA</text>
<text x="2465" y="617" font-family="Liberation Sans" font-size="9" fill="#555" letter-spacing="0.5">PERU</text>
<text x="1975" y="392" font-family="Liberation Sans" font-size="12" fill="#4f87c9" font-style="italic" letter-spacing="2">North</text>
<text x="1945" y="406" font-family="Liberation Sans" font-size="12" fill="#4f87c9" font-style="italic" letter-spacing="2">Pacific Ocean</text>
<text x="1440" y="622" font-family="Liberation Sans" font-size="12" fill="#4f87c9" font-style="italic" letter-spacing="2">Ocea</text>
<g transform="translate(1501,612) rotate(-41)"><text x="-33" y="11" font-family="Liberation Sans" font-weight="700" font-size="33" fill="#6a9acb" stroke="#d4e7fa" stroke-width="15" stroke-linejoin="round" paint-order="stroke">here</text><polygon points="-44,3 -34,13 -44,13" fill="#6a9acb" stroke="#d4e7fa" stroke-width="0"/></g>
<ellipse cx="1621.7" cy="463.4" rx="5.3" ry="4" fill="#7d7a12" transform="rotate(-5.9 1621.7 463.4)"/>
<ellipse cx="1637.1" cy="461.8" rx="5.3" ry="4" fill="#7d7a12" transform="rotate(-5.9 1637.1 461.8)"/>
<path d="M1635.6,459.8 L1639.6,461.8 L1635.6,463.8" fill="none" stroke="#fff" stroke-width="1.2" transform="rotate(-5.9 1637.1 461.8)"/>
<ellipse cx="1652.5" cy="460.2" rx="5.3" ry="4" fill="#7d7a12" transform="rotate(-5.9 1652.5 460.2)"/>
<ellipse cx="1667.9" cy="458.6" rx="5.3" ry="4" fill="#7d7a12" transform="rotate(-5.9 1667.9 458.6)"/>
<path d="M1666.4,456.6 L1670.4,458.6 L1666.4,460.6" fill="none" stroke="#fff" stroke-width="1.2" transform="rotate(-5.9 1667.9 458.6)"/>
<ellipse cx="1683.3" cy="457.0" rx="5.3" ry="4" fill="#7d7a12" transform="rotate(-5.9 1683.3 457.0)"/>
<ellipse cx="1698.7" cy="455.5" rx="5.3" ry="4" fill="#7d7a12" transform="rotate(-5.9 1698.7 455.5)"/>
<path d="M1697.2,453.5 L1701.2,455.5 L1697.2,457.5" fill="none" stroke="#fff" stroke-width="1.2" transform="rotate(-5.9 1698.7 455.5)"/>
<ellipse cx="1714.1" cy="453.9" rx="5.3" ry="4" fill="#7d7a12" transform="rotate(-5.9 1714.1 453.9)"/>
<ellipse cx="1729.5" cy="452.3" rx="5.3" ry="4" fill="#7d7a12" transform="rotate(-5.9 1729.5 452.3)"/>
<path d="M1728.0,450.3 L1732.0,452.3 L1728.0,454.3" fill="none" stroke="#fff" stroke-width="1.2" transform="rotate(-5.9 1729.5 452.3)"/>
<ellipse cx="1744.9" cy="450.7" rx="5.3" ry="4" fill="#7d7a12" transform="rotate(-5.9 1744.9 450.7)"/>
<ellipse cx="1760.3" cy="449.1" rx="5.3" ry="4" fill="#7d7a12" transform="rotate(-5.9 1760.3 449.1)"/>
<path d="M1758.8,447.1 L1762.8,449.1 L1758.8,451.1" fill="none" stroke="#fff" stroke-width="1.2" transform="rotate(-5.9 1760.3 449.1)"/>
<ellipse cx="1775.7" cy="447.5" rx="5.3" ry="4" fill="#7d7a12" transform="rotate(-5.9 1775.7 447.5)"/>
<ellipse cx="1791.1" cy="445.9" rx="5.3" ry="4" fill="#7d7a12" transform="rotate(-5.9 1791.1 445.9)"/>
<path d="M1789.6,443.9 L1793.6,445.9 L1789.6,447.9" fill="none" stroke="#fff" stroke-width="1.2" transform="rotate(-5.9 1791.1 445.9)"/>
<ellipse cx="1806.5" cy="444.3" rx="5.3" ry="4" fill="#7d7a12" transform="rotate(-5.9 1806.5 444.3)"/>
<ellipse cx="1821.9" cy="442.8" rx="5.3" ry="4" fill="#7d7a12" transform="rotate(-5.9 1821.9 442.8)"/>
<path d="M1820.4,440.8 L1824.4,442.8 L1820.4,444.8" fill="none" stroke="#fff" stroke-width="1.2" transform="rotate(-5.9 1821.9 442.8)"/>
<ellipse cx="1837.3" cy="441.2" rx="5.3" ry="4" fill="#7d7a12" transform="rotate(-5.9 1837.3 441.2)"/>
<ellipse cx="1852.7" cy="439.6" rx="5.3" ry="4" fill="#7d7a12" transform="rotate(-5.9 1852.7 439.6)"/>
<path d="M1851.2,437.6 L1855.2,439.6 L1851.2,441.6" fill="none" stroke="#fff" stroke-width="1.2" transform="rotate(-5.9 1852.7 439.6)"/>
<ellipse cx="1868.1" cy="438.0" rx="5.3" ry="4" fill="#7d7a12" transform="rotate(-5.9 1868.1 438.0)"/>
<ellipse cx="1883.5" cy="436.4" rx="5.3" ry="4" fill="#7d7a12" transform="rotate(-5.9 1883.5 436.4)"/>
<path d="M1882.0,434.4 L1886.0,436.4 L1882.0,438.4" fill="none" stroke="#fff" stroke-width="1.2" transform="rotate(-5.9 1883.5 436.4)"/>
<ellipse cx="1898.9" cy="434.8" rx="5.3" ry="4" fill="#7d7a12" transform="rotate(-5.9 1898.9 434.8)"/>
<ellipse cx="1914.3" cy="433.2" rx="5.3" ry="4" fill="#7d7a12" transform="rotate(-5.9 1914.3 433.2)"/>
<path d="M1912.8,431.2 L1916.8,433.2 L1912.8,435.2" fill="none" stroke="#fff" stroke-width="1.2" transform="rotate(-5.9 1914.3 433.2)"/>
<ellipse cx="1929.7" cy="431.6" rx="5.3" ry="4" fill="#7d7a12" transform="rotate(-5.9 1929.7 431.6)"/>
<ellipse cx="1945.0" cy="430.1" rx="5.3" ry="4" fill="#7d7a12" transform="rotate(-5.9 1945.0 430.1)"/>
<path d="M1943.5,428.1 L1947.5,430.1 L1943.5,432.1" fill="none" stroke="#fff" stroke-width="1.2" transform="rotate(-5.9 1945.0 430.1)"/>
<ellipse cx="1960.4" cy="428.5" rx="5.3" ry="4" fill="#7d7a12" transform="rotate(-5.9 1960.4 428.5)"/>
<ellipse cx="1975.8" cy="426.9" rx="5.3" ry="4" fill="#7d7a12" transform="rotate(-5.9 1975.8 426.9)"/>
<path d="M1974.3,424.9 L1978.3,426.9 L1974.3,428.9" fill="none" stroke="#fff" stroke-width="1.2" transform="rotate(-5.9 1975.8 426.9)"/>
<ellipse cx="1991.2" cy="425.3" rx="5.3" ry="4" fill="#7d7a12" transform="rotate(-5.9 1991.2 425.3)"/>
<ellipse cx="2006.6" cy="423.7" rx="5.3" ry="4" fill="#7d7a12" transform="rotate(-5.9 2006.6 423.7)"/>
<path d="M2005.1,421.7 L2009.1,423.7 L2005.1,425.7" fill="none" stroke="#fff" stroke-width="1.2" transform="rotate(-5.9 2006.6 423.7)"/>
<ellipse cx="2022.0" cy="422.1" rx="5.3" ry="4" fill="#7d7a12" transform="rotate(-5.9 2022.0 422.1)"/>
<ellipse cx="2037.4" cy="420.5" rx="5.3" ry="4" fill="#7d7a12" transform="rotate(-5.9 2037.4 420.5)"/>
<path d="M2035.9,418.5 L2039.9,420.5 L2035.9,422.5" fill="none" stroke="#fff" stroke-width="1.2" transform="rotate(-5.9 2037.4 420.5)"/>
<ellipse cx="2052.8" cy="418.9" rx="5.3" ry="4" fill="#7d7a12" transform="rotate(-5.9 2052.8 418.9)"/>
<ellipse cx="2068.2" cy="417.4" rx="5.3" ry="4" fill="#7d7a12" transform="rotate(-5.9 2068.2 417.4)"/>
<path d="M2066.7,415.4 L2070.7,417.4 L2066.7,419.4" fill="none" stroke="#fff" stroke-width="1.2" transform="rotate(-5.9 2068.2 417.4)"/>
<ellipse cx="2083.6" cy="415.8" rx="5.3" ry="4" fill="#7d7a12" transform="rotate(-5.9 2083.6 415.8)"/>
<ellipse cx="2099.0" cy="414.2" rx="5.3" ry="4" fill="#7d7a12" transform="rotate(-5.9 2099.0 414.2)"/>
<path d="M2097.5,412.2 L2101.5,414.2 L2097.5,416.2" fill="none" stroke="#fff" stroke-width="1.2" transform="rotate(-5.9 2099.0 414.2)"/>
<ellipse cx="2114.4" cy="412.6" rx="5.3" ry="4" fill="#7d7a12" transform="rotate(-5.9 2114.4 412.6)"/>
<ellipse cx="2129.8" cy="411.0" rx="5.3" ry="4" fill="#7d7a12" transform="rotate(-5.9 2129.8 411.0)"/>
<path d="M2128.3,409.0 L2132.3,411.0 L2128.3,413.0" fill="none" stroke="#fff" stroke-width="1.2" transform="rotate(-5.9 2129.8 411.0)"/>
<ellipse cx="2145.2" cy="409.4" rx="5.3" ry="4" fill="#7d7a12" transform="rotate(-5.9 2145.2 409.4)"/>
<ellipse cx="2160.6" cy="407.8" rx="5.3" ry="4" fill="#7d7a12" transform="rotate(-5.9 2160.6 407.8)"/>
<path d="M2159.1,405.8 L2163.1,407.8 L2159.1,409.8" fill="none" stroke="#fff" stroke-width="1.2" transform="rotate(-5.9 2160.6 407.8)"/>
<ellipse cx="2176.0" cy="406.2" rx="5.3" ry="4" fill="#7d7a12" transform="rotate(-5.9 2176.0 406.2)"/>
<ellipse cx="2191.4" cy="404.7" rx="5.3" ry="4" fill="#7d7a12" transform="rotate(-5.9 2191.4 404.7)"/>
<path d="M2189.9,402.7 L2193.9,404.7 L2189.9,406.7" fill="none" stroke="#fff" stroke-width="1.2" transform="rotate(-5.9 2191.4 404.7)"/>
<ellipse cx="2206.8" cy="403.1" rx="5.3" ry="4" fill="#7d7a12" transform="rotate(-5.9 2206.8 403.1)"/>
<ellipse cx="2222.2" cy="401.5" rx="5.3" ry="4" fill="#7d7a12" transform="rotate(-5.9 2222.2 401.5)"/>
<path d="M2220.7,399.5 L2224.7,401.5 L2220.7,403.5" fill="none" stroke="#fff" stroke-width="1.2" transform="rotate(-5.9 2222.2 401.5)"/>
<ellipse cx="2237.6" cy="399.9" rx="5.3" ry="4" fill="#7d7a12" transform="rotate(-5.9 2237.6 399.9)"/>
<path d="M1621.3,464 L1614.3,454 A10.5 10.5 0 1 1 1628.3,454 Z" fill="#7d7a12" stroke="#161513" stroke-width="1.6"/>
<circle cx="1621.3" cy="446" r="7.5" fill="#161513"/>
<text x="1621.3" y="450" text-anchor="middle" font-family="Liberation Sans" font-weight="700" font-size="10" fill="#fff">1</text>
<path d="M2250,398 L2243,388 A10.5 10.5 0 1 1 2257,388 Z" fill="#7d7a12" stroke="#161513" stroke-width="1.6"/>
<circle cx="2250" cy="380" r="7.5" fill="#161513"/>
<text x="2250" y="384" text-anchor="middle" font-family="Liberation Sans" font-weight="700" font-size="10" fill="#fff">2</text>
<rect x="2390.6" y="231.8" width="69.3" height="69.7" rx="7" fill="#fff" stroke="#dcdcdc" stroke-width="1"/>
<path d="M2425,250 L2444,262 L2425,274 L2406,262 Z" fill="#6b6b6b"/><path d="M2409,270 L2409,276 L2425,286 L2441,276 L2441,270 L2437,270 L2437,273 L2425,281 L2413,273 L2413,270 Z" fill="#6b6b6b"/>
<rect x="2390.6" y="393" width="69.3" height="140.7" rx="7" fill="#fff" stroke="#dcdcdc" stroke-width="1"/>
<rect x="2413" y="426" width="24" height="4.5" fill="#616161"/><rect x="2422.7" y="416.3" width="4.5" height="24" fill="#616161"/>
<rect x="2404" y="462.8" width="42" height="1.4" fill="#dedede"/>
<rect x="2413" y="497" width="24" height="4.5" fill="#c9c9c9"/>
<path d="M2117.5,613 V627 H2362 V613" fill="none" stroke="#fff" stroke-width="6"/><path d="M2117.5,613 V627 H2362 V613" fill="none" stroke="#161513" stroke-width="3"/>
<text x="2384" y="628" font-family="Liberation Sans" font-size="19" fill="#161513" stroke="#fff" stroke-width="3" paint-order="stroke">5000 km</text>
<rect x="2089.5" y="641" width="420" height="32" fill="#fff" opacity="0.75"/>
<text x="2132" y="664.5" font-family="Liberation Sans" font-size="19.5" fill="#161513" letter-spacing="0.75">Terms of use</text>
<text x="2279.5" y="664.5" font-family="Liberation Sans" font-size="19.5" fill="#161513" letter-spacing="0.45">© 1987–2022 HERE</text>
</g></svg>
<div style="position:absolute;left:1432.8px;top:189px;width:1067.2px;height:1.4px;background:#a9a9a9"></div>
<div style="position:absolute;left:1432px;top:672.5px;width:1068px;height:1.5px;background:#8a8a8a"></div>
<div style="position:absolute;left:0px;top:684px;width:2500px;height:1.4px;background:#8a8a8a"></div>
<div style="position:absolute;left:0px;top:685px;width:1.6px;height:720px;background:#6a6a6a"></div>
<div class="t" style="left:5px;top:703.8px;font-size:20.5px;line-height:20.5px;font-weight:700;color:#161513;">Related Shipments</div>
<svg style="position:absolute;left:2465px;top:699px;" width="28" height="28" viewBox="0 0 28 28"><circle cx="14" cy="14" r="13.9" fill="#1c5ca6"/><circle cx="14" cy="8.2" r="2.2" fill="#fff"/><path d="M11 12H15.5V19H17.5V21.3H10.5V19H12.5V14.3H11Z" fill="#fff"/></svg>
<div style="position:absolute;left:1.6px;top:743.4px;width:2498.4px;height:1.4px;background:#aaa"></div>
<div style="position:absolute;left:1.6px;top:742.4px;width:190.4px;height:2.6px;background:#3f6f2a"></div>
<div class="t" style="left:24.5px;top:765.9px;font-size:20px;line-height:20px;font-weight:700;color:#161513;">Actions</div>
<svg style="position:absolute;left:120px;top:770.5px;" width="15" height="8" viewBox="0 0 15 8"><polygon points="0,0 15,0 7.5,8" fill="#161513"/></svg>
<div style="position:absolute;left:172.4px;top:756px;width:1.2px;height:37.5px;background:#d4d2cf"></div>
<svg style="position:absolute;left:210.5px;top:760.3px;" width="24" height="24" viewBox="0 0 24 24"><g fill="none" stroke="#161513" stroke-width="2" stroke-linecap="butt"><path d="M15.1 19.5A8 8 0 1 1 18.7 12.4"/><path d="M15.6 12.2L18.9 16L22.2 12.2"/></g></svg>
<svg style="position:absolute;left:288.5px;top:760.3px;" width="24" height="24" viewBox="0 0 24 24"><g fill="none" stroke="#161513" stroke-width="2" stroke-linecap="butt"><rect x="3.5" y="12" width="16.5" height="11.5"/><path d="M7.5 12V4.5A4.5 4.5 0 0 1 16.5 4.5V6.5"/><path d="M10 17.5H13.5"/></g></svg>
<div style="position:absolute;left:351px;top:756px;width:1.2px;height:37.5px;background:#d4d2cf"></div>
<svg style="position:absolute;left:389.5px;top:760.3px;" width="24" height="24" viewBox="0 0 24 24"><g fill="none" stroke="#161513" stroke-width="2" stroke-linecap="butt"><path d="M0.8 0.8L22.8 23"/><path d="M13.3 5.9L17.9 1.3L22.5 5.9L17.9 10.5Z" stroke-width="2.3"/><path d="M9.5 10L1.5 18V22H5.5L13.5 14"/></g></svg>
<svg style="position:absolute;left:468.0px;top:760.3px;" width="24" height="24" viewBox="0 0 24 24"><g fill="none" stroke="#161513" stroke-width="2" stroke-linecap="butt"><path d="M2 2H18L22 6V22H2Z"/><path d="M7 2V8H16V2"/><path d="M6 22V14H18V22"/></g></svg>
<div style="position:absolute;left:530px;top:756px;width:1.2px;height:37.5px;background:#d4d2cf"></div>
<svg style="position:absolute;left:567.0px;top:760.3px;" width="24" height="24" viewBox="0 0 24 24"><g fill="none" stroke="#161513" stroke-width="2" stroke-linecap="butt"><path d="M7 6V1H17L22 6V22H8V20"/><path d="M17 1V6H22" stroke-width="1"/><rect x="1" y="9" width="10" height="10" fill="#161513" stroke="none"/><path d="M3.5 11.5L8.5 16.5M8.5 11.5L3.5 16.5" stroke="#fff" stroke-width="1.3"/></g></svg>
<svg style="position:absolute;left:646.0px;top:760.3px;" width="24" height="24" viewBox="0 0 24 24"><g fill="none" stroke="#9a9a9a" stroke-width="2" stroke-linecap="butt"><path d="M1 1V23H23"/><path d="M2 12L8 6L12 10L21 2M16 2H21V7"/><path d="M6 14V22M11 16V22M15 14V22M20 12V22" stroke-width="1.6"/></g></svg>
<svg style="position:absolute;left:724.5px;top:760.3px;" width="24" height="24" viewBox="0 0 24 24"><g fill="none" stroke="#9a9a9a" stroke-width="2" stroke-linecap="butt"><path d="M12 2H2V22H22V12"/><path d="M7 17V13L17.5 2.5L21.5 6.5L11 17Z"/></g></svg>
<div class="t" style="left:1441.8px;top:751.4px;font-size:39px;line-height:39px;font-weight:700;color:#f5921e;">Shipment Predictions</div>
<svg style="position:absolute;left:2382px;top:761.5px;" width="12" height="11" viewBox="0 0 12 11"><g fill="none" stroke="#161513" stroke-width="1.8"><path d="M1 5.5L6 1L11 5.5"/><path d="M1 10.5L6 6L11 10.5"/></g></svg>
<svg style="position:absolute;left:2451.5px;top:754px;" width="25" height="25" viewBox="0 0 25 25"><g fill="none" stroke="#161513" stroke-width="2.2"><path d="M1.2 12V1.2H23.8V23.8H11"/><path d="M2.5 21.5L15 9M7 7.5H15.5V16"/></g></svg>
<div style="position:absolute;left:1.6px;top:804px;width:2498.4px;height:1.4px;background:#a9a9a9"></div>
<div style="position:absolute;left:1.6px;top:805.4px;width:2498.4px;height:520px;background:#fff"></div>
<div style="position:absolute;left:22px;top:845px;width:24px;height:24px;border:3px solid #161513;border-radius:4px;background:transparent"></div>
<svg style="position:absolute;left:98px;top:841.5px;" width="26" height="26" viewBox="0 0 26 26"><polygon points="13.00,0.60 16.70,9.10 25.93,10.00 18.99,16.15 20.99,25.20 13.00,20.50 5.01,25.20 7.01,16.15 0.07,10.00 9.30,9.10" fill="#161513"/></svg>
<div class="t" style="left:163.2px;top:843.6px;font-size:20.6px;line-height:20.6px;font-weight:700;color:#636363;">ID</div>
<div style="position:absolute;left:207px;top:829px;width:48px;height:48px;border:1.5px solid #7a7a7a;border-radius:5px;background:#f1f1f1"></div>
<svg style="position:absolute;left:219.5px;top:841.5px;" width="26" height="26" viewBox="0 0 26 26"><g fill="none" stroke="#5a5a5a" stroke-width="2"><path d="M13 18.5C9 14 7 11 7 7.5A6 6 0 0 1 19 7.5C19 11 17 14 13 18.5Z"/><circle cx="13" cy="7.5" r="2"/><path d="M8.5 17H5L2 24H24L21 17H17.5"/></g></svg>
<div class="t" style="left:284.8px;top:843.6px;font-size:20.6px;line-height:20.6px;font-weight:700;color:#636363;">S</div>
<svg style="position:absolute;left:314px;top:840.5px;" width="28" height="30" viewBox="0 0 28 30"><g fill="none" stroke="#4a4a4a" stroke-width="2.2"><path d="M7.5 2V28"/><path d="M1.5 8L7.5 2L13.5 8"/><path d="M20.5 1.5V27.5"/><path d="M14.5 21.5L20.5 27.5L26.5 21.5"/></g></svg>
<div class="t" style="left:366.8px;top:843.6px;font-size:20.6px;line-height:20.6px;font-weight:700;color:#636363;">Carrier</div>
<svg style="position:absolute;left:451.5px;top:840.5px;" width="28" height="30" viewBox="0 0 28 30"><g fill="none" stroke="#4a4a4a" stroke-width="2.2"><path d="M7.5 2V28"/><path d="M1.5 8L7.5 2L13.5 8"/><path d="M20.5 1.5V27.5"/><path d="M14.5 21.5L20.5 27.5L26.5 21.5"/></g></svg>
<div class="t" style="left:568px;top:843.6px;font-size:20.6px;line-height:20.6px;font-weight:700;color:#636363;">Source</div>
<svg style="position:absolute;left:653.5px;top:840.5px;" width="28" height="30" viewBox="0 0 28 30"><g fill="none" stroke="#4a4a4a" stroke-width="2.2"><path d="M7.5 2V28"/><path d="M1.5 8L7.5 2L13.5 8"/><path d="M20.5 1.5V27.5"/><path d="M14.5 21.5L20.5 27.5L26.5 21.5"/></g></svg>
<div class="t" style="left:783.2px;top:843.6px;font-size:20.6px;line-height:20.6px;font-weight:700;color:#636363;">Destination</div>
<svg style="position:absolute;left:912.5px;top:840.5px;" width="28" height="30" viewBox="0 0 28 30"><g fill="none" stroke="#4a4a4a" stroke-width="2.2"><path d="M7.5 2V28"/><path d="M1.5 8L7.5 2L13.5 8"/><path d="M20.5 1.5V27.5"/><path d="M14.5 21.5L20.5 27.5L26.5 21.5"/></g></svg>
<div class="t" style="left:998.6px;top:831.6px;font-size:20.6px;line-height:20.6px;font-weight:700;color:#636363;">Planned</div>
<div class="t" style="left:998.6px;top:857.6px;font-size:20.6px;line-height:20.6px;font-weight:700;color:#636363;">Departure</div>
<svg style="position:absolute;left:1143px;top:840.5px;" width="28" height="30" viewBox="0 0 28 30"><g fill="none" stroke="#4a4a4a" stroke-width="2.2"><path d="M7.5 2V28"/><path d="M1.5 8L7.5 2L13.5 8"/><path d="M20.5 1.5V27.5"/><path d="M14.5 21.5L20.5 27.5L26.5 21.5"/></g></svg>
<div class="t" style="left:1214px;top:843.8px;font-size:20.6px;line-height:20.6px;font-weight:700;color:#636363;">Predicted Arrival</div>
<svg style="position:absolute;left:1395px;top:840.5px;" width="28" height="30" viewBox="0 0 28 30"><g fill="none" stroke="#4a4a4a" stroke-width="2.2"><path d="M7.5 2V28"/><path d="M1.5 8L7.5 2L13.5 8"/><path d="M20.5 1.5V27.5"/><path d="M14.5 21.5L20.5 27.5L26.5 21.5"/></g></svg>
<div class="t" style="left:1538px;top:831.6px;font-size:20.6px;line-height:20.6px;font-weight:700;color:#636363;">Actual</div>
<div class="t" style="left:1538px;top:857.6px;font-size:20.6px;line-height:20.6px;font-weight:700;color:#636363;">Arrival</div>
<svg style="position:absolute;left:1627.5px;top:840.5px;" width="28" height="30" viewBox="0 0 28 30"><g fill="none" stroke="#4a4a4a" stroke-width="2.2"><path d="M7.5 2V28"/><path d="M1.5 8L7.5 2L13.5 8"/><path d="M20.5 1.5V27.5"/><path d="M14.5 21.5L20.5 27.5L26.5 21.5"/></g></svg>
<div class="t" style="right:746px;top:818.2px;font-size:20.6px;line-height:20.6px;font-weight:700;color:#636363;text-align:right;">Pland</div>
<div class="t" style="right:746px;top:844.4px;font-size:20.6px;line-height:20.6px;font-weight:700;color:#636363;text-align:right;">Trans</div>
<div class="t" style="right:746px;top:870.4px;font-size:20.6px;line-height:20.6px;font-weight:700;color:#636363;text-align:right;">Time</div>
<svg style="position:absolute;left:1770px;top:840.5px;" width="28" height="30" viewBox="0 0 28 30"><g fill="none" stroke="#4a4a4a" stroke-width="2.2"><path d="M7.5 2V28"/><path d="M1.5 8L7.5 2L13.5 8"/><path d="M20.5 1.5V27.5"/><path d="M14.5 21.5L20.5 27.5L26.5 21.5"/></g></svg>
<div class="t" style="right:577px;top:818.2px;font-size:20.6px;line-height:20.6px;font-weight:700;color:#636363;text-align:right;">Prdtd</div>
<div class="t" style="right:577px;top:844.4px;font-size:20.6px;line-height:20.6px;font-weight:700;color:#636363;text-align:right;">Trans</div>
<div class="t" style="right:577px;top:870.4px;font-size:20.6px;line-height:20.6px;font-weight:700;color:#636363;text-align:right;">Time</div>
<svg style="position:absolute;left:1940.5px;top:840.5px;" width="28" height="30" viewBox="0 0 28 30"><g fill="none" stroke="#4a4a4a" stroke-width="2.2"><path d="M7.5 2V28"/><path d="M1.5 8L7.5 2L13.5 8"/><path d="M20.5 1.5V27.5"/><path d="M14.5 21.5L20.5 27.5L26.5 21.5"/></g></svg>
<div class="t" style="right:412px;top:818.2px;font-size:20.6px;line-height:20.6px;font-weight:700;color:#636363;text-align:right;">Act</div>
<div class="t" style="right:412px;top:844.4px;font-size:20.6px;line-height:20.6px;font-weight:700;color:#636363;text-align:right;">Trans</div>
<div class="t" style="right:412px;top:870.4px;font-size:20.6px;line-height:20.6px;font-weight:700;color:#636363;text-align:right;">Time</div>
<svg style="position:absolute;left:2105.5px;top:840.5px;" width="28" height="30" viewBox="0 0 28 30"><g fill="none" stroke="#4a4a4a" stroke-width="2.2"><path d="M7.5 2V28"/><path d="M1.5 8L7.5 2L13.5 8"/><path d="M20.5 1.5V27.5"/><path d="M14.5 21.5L20.5 27.5L26.5 21.5"/></g></svg>
<div class="t" style="left:2175.8px;top:843.6px;font-size:20.6px;line-height:20.6px;font-weight:700;color:#636363;">Mode</div>
<svg style="position:absolute;left:2247.5px;top:840.5px;" width="28" height="30" viewBox="0 0 28 30"><g fill="none" stroke="#4a4a4a" stroke-width="2.2"><path d="M7.5 2V28"/><path d="M1.5 8L7.5 2L13.5 8"/><path d="M20.5 1.5V27.5"/><path d="M14.5 21.5L20.5 27.5L26.5 21.5"/></g></svg>
<div class="t" style="left:2396px;top:843.6px;font-size:20.6px;line-height:20.6px;font-weight:700;color:#636363;">Status</div>
<svg style="position:absolute;left:2476px;top:840.5px;" width="28" height="30" viewBox="0 0 28 30"><g fill="none" stroke="#4a4a4a" stroke-width="2.2"><path d="M7.5 2V28"/><path d="M1.5 8L7.5 2L13.5 8"/><path d="M20.5 1.5V27.5"/><path d="M14.5 21.5L20.5 27.5L26.5 21.5"/></g></svg>
<div style="position:absolute;left:1.6px;top:904.4px;width:2498.4px;height:1.2px;background:#e6e6e6"></div>
<div style="position:absolute;left:22px;top:933px;width:24px;height:24px;border:3px solid #161513;border-radius:4px;background:transparent"></div>
<svg style="position:absolute;left:98px;top:929px;" width="26" height="26" viewBox="0 0 26 26"><polygon points="13.00,0.60 16.70,9.10 25.93,10.00 18.99,16.15 20.99,25.20 13.00,20.50 5.01,25.20 7.01,16.15 0.07,10.00 9.30,9.10" fill="none" stroke="#161513" stroke-width="2.4" stroke-linejoin="miter"/></svg>
<div class="t" style="left:163.2px;top:931.9px;font-size:20px;line-height:20px;font-weight:400;color:#174d94;">MI</div>
<div style="position:absolute;left:207px;top:926px;width:30px;height:31px;background:#161513;border-radius:4px"></div>
<svg style="position:absolute;left:207px;top:926px;" width="30" height="31" viewBox="0 0 31 31"><path d="M7 15.5L12.5 21L24 9.5" fill="none" stroke="#fff" stroke-width="3.2"/></svg>
<svg style="position:absolute;left:285px;top:922px;" width="46" height="42" viewBox="0 0 46 42"><g fill="#dd0b0b"><rect x="0" y="2" width="9" height="24"/><path d="M13 5C13 2 15 1 18 1H36C40 1 44 3 45 8L45 18C45 22 42 25 38 25H30C31 28 32 31 32 34C32 38 31 40 28 40C26 40 25 38 24 34C23 30 19 27 13 22Z"/></g></svg>
<div class="t" style="left:366.8px;top:931.9px;font-size:20px;line-height:20px;font-weight:400;color:#174d94;">COSCO</div>
<div class="t" style="left:568px;top:931.9px;font-size:20px;line-height:20px;font-weight:400;color:#174d94;">HKHKG</div>
<div class="t" style="left:783.2px;top:931.9px;font-size:20px;line-height:20px;font-weight:400;color:#174d94;">USLGB</div>
<div class="t" style="left:998.6px;top:931.9px;font-size:20px;line-height:20px;font-weight:400;color:#161513;letter-spacing:0.4px">2022-10-31 08:…</div>
<div class="t" style="left:1213.6px;top:931.7px;font-size:20px;line-height:20px;font-weight:400;color:#161513;letter-spacing:0.5px">2022-12-17 23:58 America/…</div>
<div class="t" style="left:1701.6px;top:931.9px;font-size:20px;line-height:20px;font-weight:400;color:#161513;">26D 4…</div>
<div class="t" style="left:1849.4px;top:931.7px;font-size:20px;line-height:20px;font-weight:400;color:#161513;letter-spacing:0.4px">48D 7H 58M</div>
<div class="t" style="left:2175.8px;top:931.9px;font-size:20px;line-height:20px;font-weight:400;color:#174d94;">VESSEL-CO</div>
<div class="t" style="left:2396px;top:931.9px;font-size:20px;line-height:20px;font-weight:400;color:#161513;">SECURE R</div>
<div style="position:absolute;left:1.6px;top:978.4px;width:2498.4px;height:1.2px;background:#e6e6e6"></div>
<div style="position:absolute;left:1.6px;top:979.6px;width:2498.4px;height:73.4px;background:#f5f5f5"></div>
<div style="position:absolute;left:22px;top:1007px;width:24px;height:24px;border:3px solid #161513;border-radius:4px;background:transparent"></div>
<svg style="position:absolute;left:98px;top:1004px;" width="26" height="26" viewBox="0 0 26 26"><polygon points="13.00,0.60 16.70,9.10 25.93,10.00 18.99,16.15 20.99,25.20 13.00,20.50 5.01,25.20 7.01,16.15 0.07,10.00 9.30,9.10" fill="none" stroke="#161513" stroke-width="2.4" stroke-linejoin="miter"/></svg>
<div class="t" style="left:163.2px;top:1007.1px;font-size:20px;line-height:20px;font-weight:400;color:#174d94;">MI</div>
<div style="position:absolute;left:207px;top:1001px;width:24px;height:25px;border:3px solid #161513;border-radius:4px;background:transparent"></div>
<div class="t" style="left:366.8px;top:1007.1px;font-size:20px;line-height:20px;font-weight:400;color:#174d94;">BEST INTERM<span style="color:#161513">…</span></div>
<div class="t" style="left:568px;top:1007.1px;font-size:20px;line-height:20px;font-weight:400;color:#174d94;">USLGB</div>
<div class="t" style="left:783.2px;top:1007.1px;font-size:20px;line-height:20px;font-weight:400;color:#174d94;">DENVER PLANT</div>
<div class="t" style="left:998.6px;top:1007.1px;font-size:20px;line-height:20px;font-weight:400;color:#161513;letter-spacing:0.4px">2022-11-25 20:…</div>
<div class="t" style="left:1701.6px;top:1007.1px;font-size:20px;line-height:20px;font-weight:400;color:#161513;">18H 1…</div>
<div class="t" style="left:2175.8px;top:1007.1px;font-size:20px;line-height:20px;font-weight:400;color:#174d94;">DRAYAGE</div>
<div class="t" style="left:2396px;top:1007.1px;font-size:20px;line-height:20px;font-weight:400;color:#161513;">SECURE R</div>
<div style="position:absolute;left:1202.8px;top:811px;width:291.2px;height:150px;border:4px solid #f7921c"></div>
<div style="position:absolute;left:1807.2px;top:810.6px;width:202.6px;height:150.4px;border:4px solid #f7921c"></div>
<div style="position:absolute;left:1.6px;top:1325px;width:2498.4px;height:1px;background:#e4e4e4"></div>
<div style="position:absolute;left:1.6px;top:1326px;width:2498.4px;height:24px;background:#f8f8f8"></div>
<div style="position:absolute;left:8px;top:1333px;width:1349px;height:14px;background:#c3c3c3;border-radius:7px"></div>
<div style="position:absolute;left:1.6px;top:1350px;width:2498.4px;height:53px;background:#efeeec"></div>
<div class="t" style="left:988px;top:1353.4px;font-size:20.8px;line-height:20.8px;font-weight:400;color:#161513;">Associated Table: Orders</div>
<div class="t" style="left:2187px;top:1353.2px;font-size:21px;line-height:21px;font-weight:400;color:#161513;">Records 2 of 2</div>
<div class="t" style="left:2352px;top:1368.4px;font-size:20.8px;line-height:20.8px;font-weight:700;color:#999;">More</div>
<div class="t" style="left:2455px;top:1368.4px;font-size:20.8px;line-height:20.8px;font-weight:700;color:#999;">All</div>
<div style="position:absolute;left:0px;top:1403px;width:2500px;height:1.3px;background:#8a8a8a"></div>
</body></html>
